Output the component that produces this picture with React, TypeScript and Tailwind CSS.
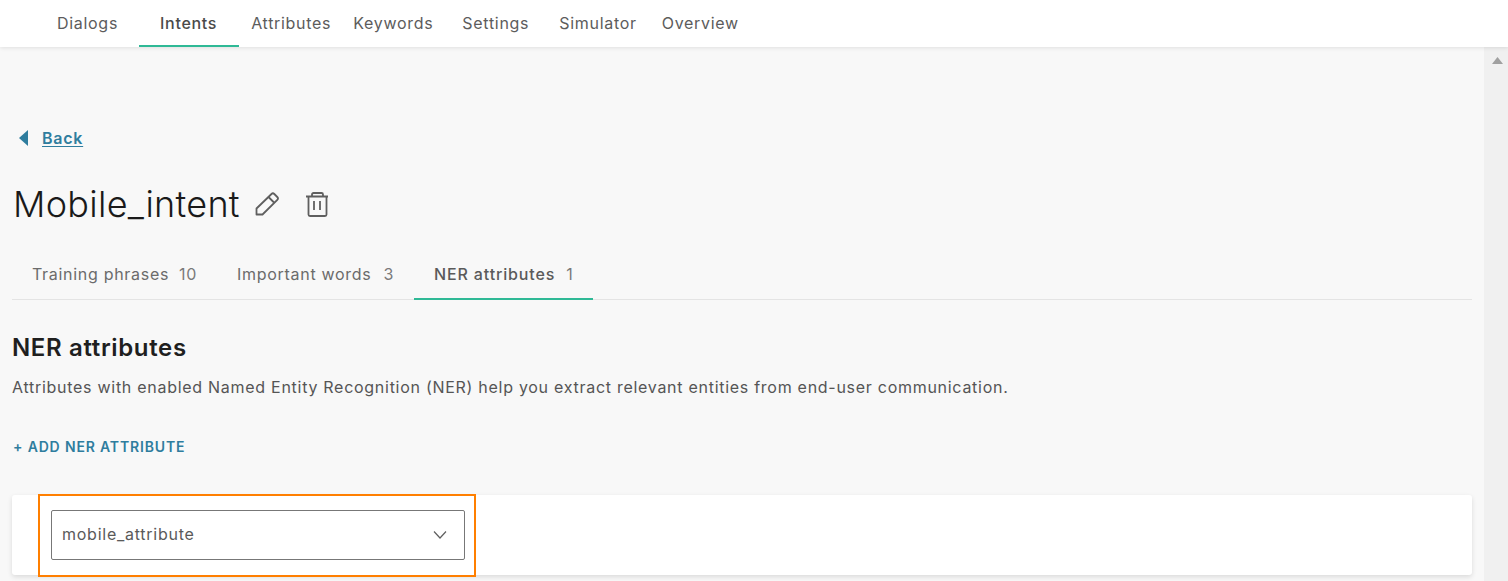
import React from 'react';

const navItems = [
  { label: 'Dialogs', className: 'ml-[57px] mr-[21px] text-[#5c5c5c]' },
  { label: 'Intents', className: 'pl-[21px] pr-[22px] font-medium text-[#4a4a4a] border-b-2 border-[#2fb996]' },
  { label: 'Attributes', className: 'ml-[12px] mr-[22px] text-[#5c5c5c]' },
  { label: 'Keywords', className: 'mr-[29px] text-[#5c5c5c]' },
  { label: 'Settings', className: 'mr-[30px] text-[#5c5c5c]' },
  { label: 'Simulator', className: 'mr-[25px] text-[#5c5c5c]' },
  { label: 'Overview', className: 'text-[#5c5c5c]' },
];

const tabs = [
  { label: 'Training phrases', count: '10', className: 'text-[#6b6b6b]', countClassName: 'ml-[10px]' },
  { label: 'Important words', count: '3', className: 'text-[#6b6b6b]', countClassName: 'ml-[12px]' },
  { label: 'NER attributes', count: '1', className: 'border-b-2 border-[#2fb996] font-medium tracking-[0.85px] text-[#5a5a5a]', countClassName: 'ml-[11px]' },
];

export default function App() {
  return (
    <div className="h-[581px] w-[1508px] overflow-hidden bg-[#f8f8f8] font-['Inter',sans-serif] flex flex-col">
      <header className="relative z-10 h-[47px] shrink-0 flex bg-white shadow-[0_1px_4px_rgba(0,0,0,0.1)] tracking-[0.7px]">
        {navItems.map((item) => (
          <div key={item.label} className={`h-[47px] pt-[13px] text-[16px] leading-[20px] ${item.className}`}>
            {item.label}
          </div>
        ))}
      </header>

      <div className="flex flex-1 min-h-0">
        <main className="w-[1484px] pl-3 pr-3 pt-[81px]">
          <a className="flex items-center ml-[7px] text-[16px] leading-[20px] font-semibold tracking-[0.75px] text-[#2f7d9e]">
            <svg width="10" height="16" viewBox="0 0 10 16" className="mr-[13px]">
              <path d="M9 0v16L0 8z" fill="#2f7d9e" />
            </svg>
            <span className="underline underline-offset-2">Back</span>
          </a>

          <div className="flex items-center mt-[36px] h-[40px]">
            <h1 className="ml-[1px] text-[36px] leading-[40px] font-light tracking-[0.28px] text-[#1a1a1a]">Mobile_intent</h1>
            <svg width="24" height="24" viewBox="0 0 24 24" fill="none" stroke="#5f5f5f" strokeWidth="1.8" className="ml-[15px]">
              <path d="M1.5 22.5v-6L16.5 2a2 2 0 0 1 2.8 0l3 3a2 2 0 0 1 0 2.8L7.5 22.5z" strokeLinejoin="round" />
              <path d="M13.5 5l5.5 5.5" />
            </svg>
            <svg width="22" height="25" viewBox="0 0 22 25" fill="none" stroke="#5f5f5f" strokeWidth="1.8" className="ml-[27px]">
              <path d="M0 4.5h22M2.5 4.5v18a1.5 1.5 0 0 0 1.5 1.5h15a1.5 1.5 0 0 0 1.5-1.5v-18M6 4.5V2.5A1.5 1.5 0 0 1 7.5 1h8A1.5 1.5 0 0 1 17 2.5v2M8 9v9M14 9v9" />
            </svg>
          </div>

          <div className="flex mt-[25px] h-[51px] border-b border-[#e4e4e4] text-[16px] leading-[20px] tracking-[0.7px]">
            {tabs.map((tab) => (
              <div key={tab.label} className={`px-[20px] pt-[15px] h-[51px] ${tab.className}`}>
                {tab.label}
                <span className={`font-normal text-[#7a7a7a] ${tab.countClassName}`}>{tab.count}</span>
              </div>
            ))}
          </div>

          <h2 className="mt-[33px] text-[24px] leading-[30px] font-semibold tracking-[0.64px] text-[#1f1f1f]">NER attributes</h2>
          <p className="mt-[14px] text-[16px] leading-[20px] tracking-[0.72px] text-[#555555]">
            Attributes with enabled Named Entity Recognition (NER) help you extract relevant entities from end-user communication.
          </p>

          <div className="mt-[40px] ml-[1px] text-[14px] leading-[20px] font-semibold tracking-[0.84px] text-[#2f7d9e]">+ ADD NER ATTRIBUTE</div>

          <div className="relative mt-[38px] h-[80px] w-[1460px] rounded-[3px] bg-white shadow-[0_2px_5px_rgba(0,0,0,0.12)] pt-[15px] pl-[39px]">
            <div className="absolute left-[26px] top-[-1px] h-[83px] w-[438px] border-2 border-[#ff7f00]" />
            <div className="flex items-center justify-between w-[414px] h-[50px] rounded-[2px] border border-[#777777] pl-[10px] pr-[16px] pb-[2px] text-[16px] tracking-[0.75px] text-[#5a5a5a]">
              mobile_attribute
              <svg width="16" height="10" viewBox="0 0 16 10" fill="none" stroke="#5f5f5f" strokeWidth="1.2" className="mt-[2px]">
                <path d="M2 1.5l6 6.5 6-6.5" />
              </svg>
            </div>
          </div>
        </main>

        <aside className="w-[24px] bg-[#f0f0f0] flex justify-center pt-[10px]">
          <svg width="11" height="7" viewBox="0 0 11 7" className="ml-[2px]">
            <path d="M5.5 0L11 7H0z" fill="#a0a0a0" />
          </svg>
        </aside>
      </div>
    </div>
  );
}
